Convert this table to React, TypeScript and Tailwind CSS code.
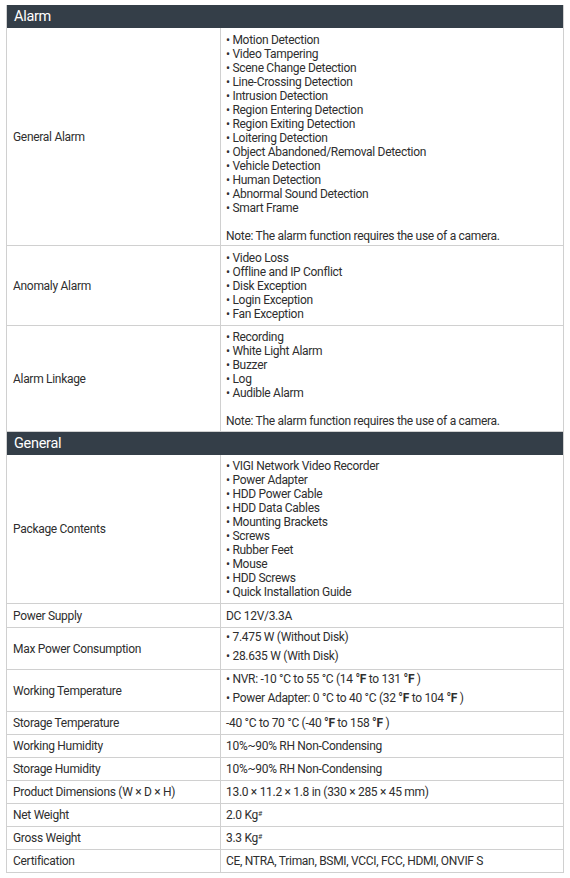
import React from "react";

const F = () => <span className="font-bold">°F</span>;

type Row = {
  label: React.ReactNode;
  h: string;
  content: React.ReactNode;
};

const Bullets = ({ items }: { items: string[] }) => (
  <div>
    {items.map((t) => (
      <div key={t} className="h-[14px] leading-[14px] whitespace-nowrap">
        • {t}
      </div>
    ))}
  </div>
);

const Note = () => (
  <div className="h-[14px] leading-[14px] mt-[14px] whitespace-nowrap">
    Note: The alarm function requires the use of a camera.
  </div>
);

const Header = ({ title }: { title: string }) => (
  <div className="h-[23px] bg-[#343e48] text-white text-[14.5px] leading-[23px] pl-[7px]">
    {title}
  </div>
);

const TableRow = ({ row }: { row: Row }) => (
  <div className={`grid grid-cols-[214px_1fr] border-b border-[#d0d0d0] ${row.h}`}>
    <div className="flex items-center pl-[6px] border-r border-[#d0d0d0]">
      <span>{row.label}</span>
    </div>
    <div className="pl-[5px]">{row.content}</div>
  </div>
);

const Single = ({ text }: { text: React.ReactNode }) => (
  <div className="h-full flex items-center whitespace-nowrap">
    <span>{text}</span>
  </div>
);

const Two = ({ a, b }: { a: React.ReactNode; b: React.ReactNode }) => (
  <div>
    <div className="h-[19px] leading-[19px] whitespace-nowrap">• {a}</div>
    <div className="h-[19px] leading-[19px] whitespace-nowrap">• {b}</div>
  </div>
);

const alarmRows: Row[] = [
  {
    label: "General Alarm",
    h: "h-[218px]",
    content: (
      <div className="pt-[5px]">
        <Bullets
          items={[
            "Motion Detection",
            "Video Tampering",
            "Scene Change Detection",
            "Line-Crossing Detection",
            "Intrusion Detection",
            "Region Entering Detection",
            "Region Exiting Detection",
            "Loitering Detection",
            "Object Abandoned/Removal Detection",
            "Vehicle Detection",
            "Human Detection",
            "Abnormal Sound Detection",
            "Smart Frame",
          ]}
        />
        <Note />
      </div>
    ),
  },
  {
    label: "Anomaly Alarm",
    h: "h-[80px]",
    content: (
      <div className="pt-[5px]">
        <Bullets
          items={["Video Loss", "Offline and IP Conflict", "Disk Exception", "Login Exception", "Fan Exception"]}
        />
      </div>
    ),
  },
  {
    label: "Alarm Linkage",
    h: "h-[106px]",
    content: (
      <div className="pt-[4px]">
        <Bullets items={["Recording", "White Light Alarm", "Buzzer", "Log", "Audible Alarm"]} />
        <Note />
      </div>
    ),
  },
];

const generalRows: Row[] = [
  {
    label: "Package Contents",
    h: "h-[149px]",
    content: (
      <div className="pt-[4px]">
        <Bullets
          items={[
            "VIGI Network Video Recorder",
            "Power Adapter",
            "HDD Power Cable",
            "HDD Data Cables",
            "Mounting Brackets",
            "Screws",
            "Rubber Feet",
            "Mouse",
            "HDD Screws",
            "Quick Installation Guide",
          ]}
        />
      </div>
    ),
  },
  { label: "Power Supply", h: "h-[24px]", content: <Single text="DC 12V/3.3A" /> },
  {
    label: "Max Power Consumption",
    h: "h-[42px]",
    content: <Two a="7.475 W (Without Disk)" b="28.635 W (With Disk)" />,
  },
  {
    label: "Working Temperature",
    h: "h-[42px]",
    content: (
      <Two
        a={<>NVR: -10 °C to 55 °C (14 <F /> to 131 <F /> )</>}
        b={<>Power Adapter: 0 °C to 40 °C (32 <F /> to 104 <F /> )</>}
      />
    ),
  },
  {
    label: "Storage Temperature",
    h: "h-[23px]",
    content: <Single text={<>-40 °C to 70 °C (-40 <F /> to 158 <F /> )</>} />,
  },
  { label: "Working Humidity", h: "h-[23px]", content: <Single text="10%~90% RH Non-Condensing" /> },
  { label: "Storage Humidity", h: "h-[23px]", content: <Single text="10%~90% RH Non-Condensing" /> },
  {
    label: "Product Dimensions (W × D ×  H)",
    h: "h-[23px]",
    content: <Single text="13.0 × 11.2 × 1.8 in (330 × 285 × 45 mm)" />,
  },
  {
    label: "Net Weight",
    h: "h-[23px]",
    content: <Single text={<>2.0 Kg<sup className="text-[7px]">#</sup></>} />,
  },
  {
    label: "Gross Weight",
    h: "h-[23px]",
    content: <Single text={<>3.3 Kg<sup className="text-[7px]">#</sup></>} />,
  },
  {
    label: "Certification",
    h: "h-[23px]",
    content: <Single text="CE, NTRA, Triman, BSMI, VCCI, FCC, HDMI, ONVIF S" />,
  },
];

export default function App() {
  return (
    <div className="w-[570px] h-[878px] bg-white pt-[5px] pl-[6px]">
      <div
        className="w-[558px] border-l border-r border-[#d0d0d0] text-[12px] text-[#2e2e2e] tracking-[-0.3px]"
        style={{ fontFamily: "Roboto, 'Liberation Sans', sans-serif" }}
      >
        <Header title="Alarm" />
        {alarmRows.map((r, i) => (
          <TableRow key={i} row={r} />
        ))}
        <Header title="General" />
        {generalRows.map((r, i) => (
          <TableRow key={i} row={r} />
        ))}
      </div>
    </div>
  );
}
